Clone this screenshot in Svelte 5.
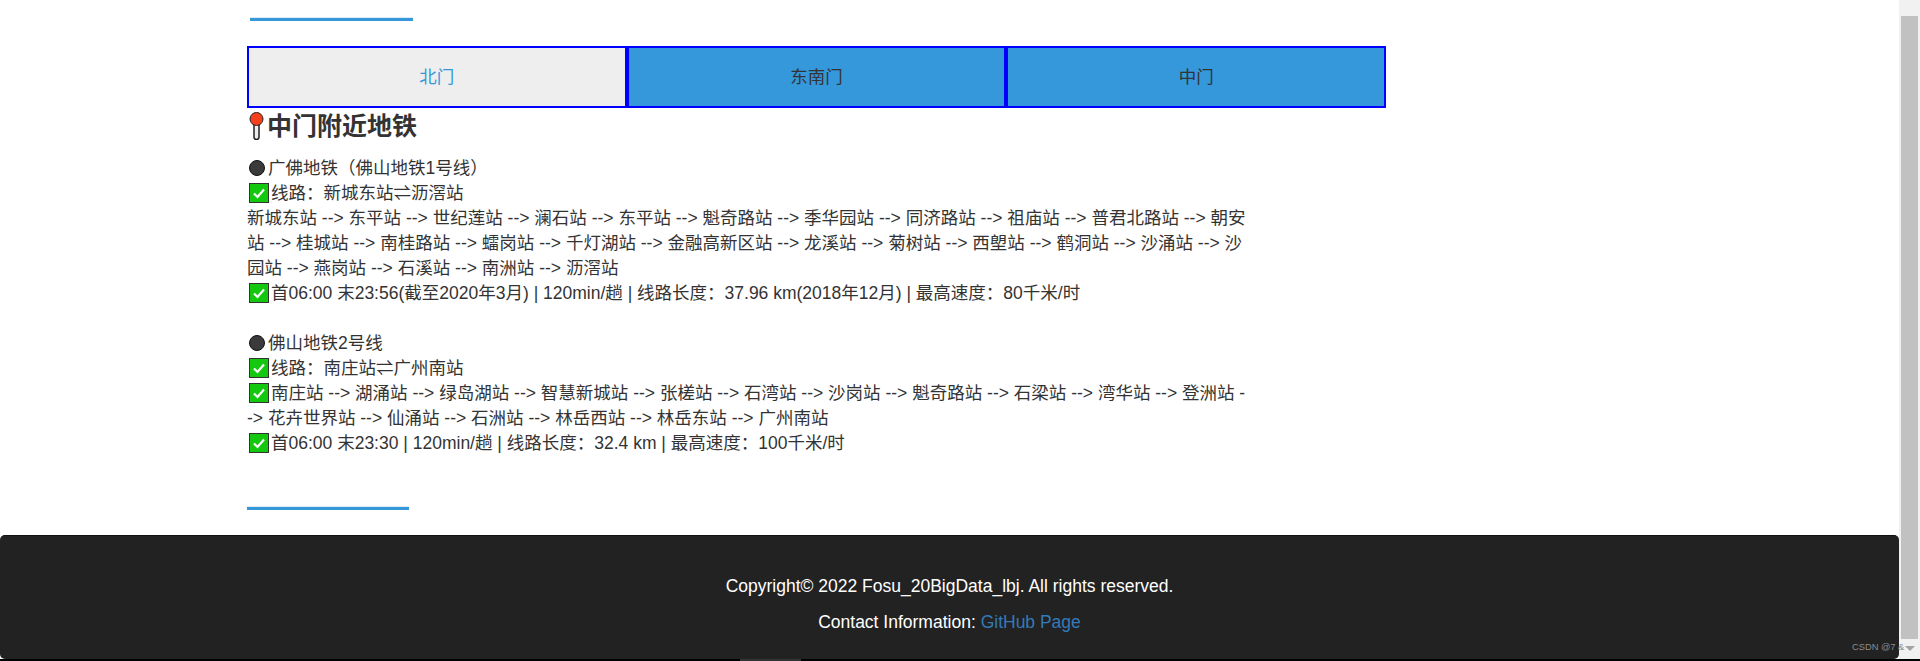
<script>
  const tabs = ['北门', '东南门', '中门'];
  let active = 0;

  const lines = [
    {
      name: '广佛地铁（佛山地铁1号线）',
      route: '线路：新城东站⇌沥滘站',
      stops: '新城东站 --> 东平站 --> 世纪莲站 --> 澜石站 --> 东平站 --> 魁奇路站 --> 季华园站 --> 同济路站 --> 祖庙站 --> 普君北路站 --> 朝安站 --> 桂城站 --> 南桂路站 --> 𧒽岗站 --> 千灯湖站 --> 金融高新区站 --> 龙溪站 --> 菊树站 --> 西塱站 --> 鹤洞站 --> 沙涌站 --> 沙园站 --> 燕岗站 --> 石溪站 --> 南洲站 --> 沥滘站',
      stopsCheck: false,
      info: '首06:00 末23:56(截至2020年3月) | 120min/趟 | 线路长度：37.96 km(2018年12月) | 最高速度：80千米/时'
    },
    {
      name: '佛山地铁2号线',
      route: '线路：南庄站⇌广州南站',
      stops: '南庄站 --> 湖涌站 --> 绿岛湖站 --> 智慧新城站 --> 张槎站 --> 石湾站 --> 沙岗站 --> 魁奇路站 --> 石梁站 --> 湾华站 --> 登洲站 --> 花卉世界站 --> 仙涌站 --> 石洲站 --> 林岳西站 --> 林岳东站 --> 广州南站',
      stopsCheck: true,
      info: '首06:00 末23:30 | 120min/趟 | 线路长度：32.4 km | 最高速度：100千米/时'
    }
  ];
</script>

{#snippet check()}
  <svg class="check" width="20" height="20" viewBox="0 0 20 20">
    <rect x="0.5" y="0.5" width="19" height="19" fill="#14c80f" stroke="#333" />
    <path d="M5 10.5l3.5 3.5L15 6.5" fill="none" stroke="#fff" stroke-width="2.2" />
  </svg>
{/snippet}

<div class="page">
  <div class="row">
    <main>
      <div class="content">
        <div class="rule top-rule"></div>

        <div class="tabs">
          {#each tabs as tab, i}
            <div class="tab" class:active={i === active}>{tab}</div>
          {/each}
        </div>

        <h2>
          <svg class="pin" width="20" height="28" viewBox="0 0 20 28">
            <path d="M7 11h5v14a2.500 2.500 0 0 1-5 0z" fill="#eee" stroke="#222" stroke-width="1.500" />
            <circle cx="9.500" cy="7" r="6.500" fill="#f4411c" stroke="#222" stroke-width="1" />
          </svg>中门附近地铁
        </h2>

        <div class="lines">
          {#each lines as line}
            <p class="line">
              <svg class="dot" width="16" height="16" viewBox="0 0 16 16">
                <circle cx="8" cy="8" r="7.500" fill="#3a3a3a" stroke="#111" />
              </svg>{line.name}<br />
              {@render check()}{line.route}<br />
              {#if line.stopsCheck}{@render check()}{/if}{line.stops}<br />
              {@render check()}{line.info}
            </p>
          {/each}
        </div>

        <div class="rule bottom-rule"></div>
      </div>

      <footer>
        <p>Copyright© 2022 Fosu_20BigData_lbj. All rights reserved.</p>
        <p>Contact Information: <a href="#top">GitHub Page</a></p>
      </footer>
    </main>

    <aside class="scrollbar">
      <div class="thumb"></div>
      <div class="arrow"></div>
    </aside>
  </div>

  <div class="strip"><span></span></div>
  <div class="watermark">CSDN @7 &amp;</div>
</div>

<style>
  :global(body) {
    margin: 0;
    background: #fff;
  }

  .page {
    position: relative;
    height: 661px;
    overflow: hidden;
    display: flex;
    flex-direction: column;
    color: #333;
    font-family: "Liberation Sans", "Noto Sans CJK SC", sans-serif;
    font-size: 17.5px;
  }

  .row {
    display: flex;
    height: 659px;
  }

  main {
    flex: 1;
    display: flex;
    flex-direction: column;
    justify-content: space-between;
  }

  .content {
    margin-left: 247px;
    width: 1000px;
    padding-top: 17px;
  }

  .rule {
    height: 3px;
    background: #3498db;
    border-top: 1px solid #dfeaf2;
  }

  .top-rule {
    width: 163px;
    margin-left: 3px;
  }

  .bottom-rule {
    width: 162px;
    margin-top: 50px;
  }

  .tabs {
    display: flex;
    width: 1139px;
    margin-top: 25px;
  }

  .tab {
    box-sizing: border-box;
    flex: 1;
    height: 62px;
    border: 2px solid #00f;
    padding-bottom: 3px;
    background: #3498db;
    display: flex;
    align-items: center;
    justify-content: center;
  }

  .tab.active {
    background: #eee;
    color: #3498db;
  }

  h2 {
    margin: 0 0 11.5px;
    height: 36px;
    line-height: 36px;
    font-size: 25px;
    font-weight: 700;
    display: flex;
    align-items: center;
  }

  .pin {
    flex: none;
  }

  .lines {
    display: flex;
    flex-direction: column;
    gap: 25px;
  }

  .line {
    margin: 0;
    line-height: 25px;
  }

  .dot {
    vertical-align: -2px;
    margin: 0 3px 0 2px;
  }

  .check {
    vertical-align: -4px;
    margin: 0 2px 0 2px;
  }

  footer {
    height: 124px;
    box-sizing: border-box;
    background: #222;
    border-top: 1px solid #111;
    border-radius: 5px;
    color: #fff;
    text-align: center;
    padding-top: 40px;
  }

  footer p {
    margin: 0 0 16px;
    line-height: 20px;
  }

  footer a {
    color: #337ab7;
    text-decoration: none;
  }

  .scrollbar {
    width: 21px;
    background: #f1f1f1;
    box-sizing: border-box;
    padding: 16px 2px 0;
    display: flex;
    flex-direction: column;
    align-items: center;
  }

  .thumb {
    width: 17px;
    height: 623px;
    background: #c1c1c1;
  }

  .arrow {
    margin-top: 7px;
    border-left: 5px solid transparent;
    border-right: 5px solid transparent;
    border-top: 5px solid #a3a3a3;
  }

  .strip {
    height: 2px;
    background: #000;
  }

  .strip span {
    display: block;
    width: 61px;
    height: 2px;
    margin-left: 740px;
    background: #333;
  }

  .watermark {
    position: absolute;
    left: 1852px;
    top: 641px;
    font-size: 9.3px;
    line-height: 12px;
    color: #8c8c8c;
  }
</style>
